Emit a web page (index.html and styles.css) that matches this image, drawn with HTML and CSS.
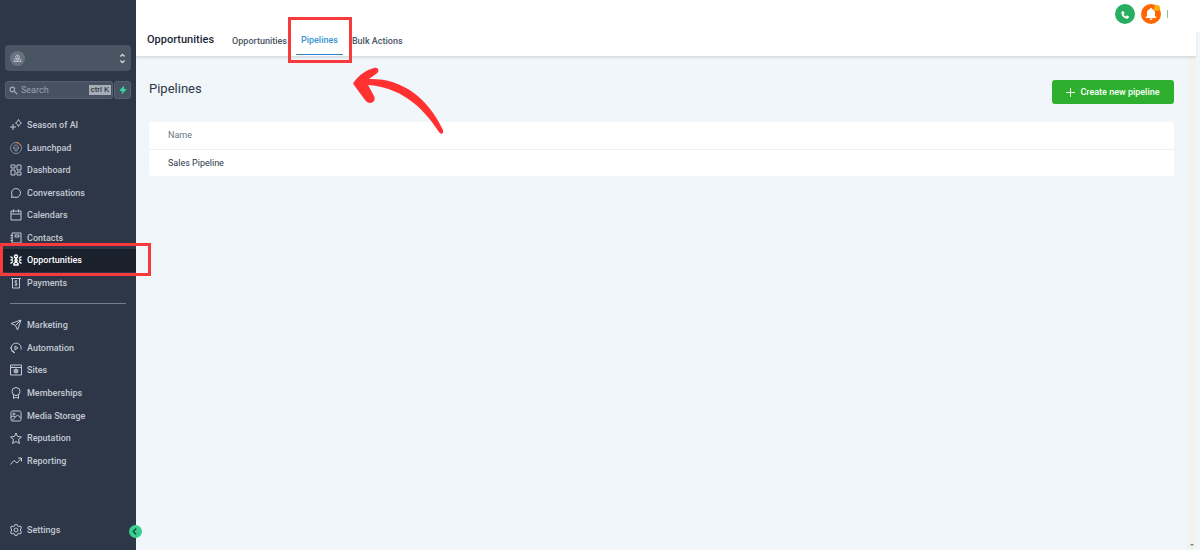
FILE: index.html
```html
<!DOCTYPE html>
<html lang="en">
<head>
    <meta charset="UTF-8">
    <meta name="viewport" content="width=device-width, initial-scale=1.0">
    <title>Pipelines</title>
    <link rel="stylesheet" href="styles.css">
</head>
<body>
    <aside class="sidebar">
        <button class="account" aria-label="Switch account">
            <span class="avatar">
                <svg viewBox="0 0 24 24"><circle cx="12" cy="8" r="5"/><circle cx="12" cy="8" r="1"/><path d="M8 12l-5 4v4h18v-4l-5-4M8 13l4 5 4-5"/></svg>
            </span>
            <svg class="updown" viewBox="0 0 10 16"><path d="M2 5l3-3 3 3M2 11l3 3 3-3"/></svg>
        </button>

        <div class="search-row">
            <label class="search">
                <svg viewBox="0 0 24 24"><circle cx="9" cy="9" r="6"/><path d="M14 14l8 8"/></svg>
                <input type="text" placeholder="Search" aria-label="Search">
                <kbd>ctrl K</kbd>
            </label>
            <button class="quick" aria-label="Quick actions">
                <svg viewBox="0 0 16 16"><path d="M9 1L2 9h5l-1 6 8-8H9z"/></svg>
            </button>
        </div>

        <nav>
            <ul class="menu menu-main">
                <li><a href="#"><svg viewBox="0 0 24 24"><path d="M17 1l2 4 4 3-4 3-2 4-2-4-4-3 4-3zM6 10v12M0 16h12"/></svg>Season of AI</a></li>
                <li><a href="#"><svg class="launch" viewBox="0 0 24 24"><circle cx="12" cy="12" r="11"/><path d="M9 14H7v-4l3-4h4l3 4v4h-2M10 10v8h4v-8"/><path class="arc" d="M12 1a11 11 0 0 1 10 7"/></svg>Launchpad</a></li>
                <li><a href="#"><svg viewBox="0 0 24 24"><path d="M2 2h8v6H2zM14 2h8v10h-8zM2 12h8v10H2zM14 16h8v6h-8z"/></svg>Dashboard</a></li>
                <li><a href="#"><svg viewBox="0 0 24 24"><path d="M3 21l1-5a9 9 0 1 1 4 4z"/></svg>Conversations</a></li>
                <li><a href="#"><svg viewBox="0 0 24 24"><path d="M2 4h20v18H2zM2 10h20M7 1v6M17 1v6"/></svg>Calendars</a></li>
                <li><a href="#"><svg viewBox="0 0 24 24"><path d="M4 2h18v20H4zM1 7h5M1 12h5M1 17h5M10 6h8v4h-8z"/></svg>Contacts</a></li>
                <li class="active">
                    <a href="#"><svg viewBox="0 0 24 24"><circle cx="12" cy="5" r="3"/><circle cx="12" cy="13" r="2"/><path d="M12 8v3M8 22v-3l4-3 4 3v3zM1 5l5 4M1 12h5M1 19l5-4M23 5l-5 4M23 12h-5M23 19l-5-4"/></svg>Opportunities</a>
                    <span class="marker marker-menu"></span>
                </li>
                <li><a href="#"><svg viewBox="0 0 24 24"><path d="M2 3h20M5 3v19h14V3M14 8c-4-2-6 2-2 4s2 6-3 4M12 6v12"/></svg>Payments</a></li>
            </ul>
            <hr>
            <ul class="menu menu-more">
                <li><a href="#"><svg viewBox="0 0 24 24"><path d="M2 9l20-7-7 20-4-9zM22 2L11 13"/></svg>Marketing</a></li>
                <li><a href="#"><svg viewBox="0 0 24 24"><path d="M10 22a10 10 0 1 1 12-7M0 12h4M10 8l6 4-6 4zM3 18h4v4"/></svg>Automation</a></li>
                <li><a href="#"><svg viewBox="0 0 24 24"><path d="M1 2h22v20H1zM1 7h22M5 4h1M9 4h1"/><circle cx="12" cy="14" r="4"/><path d="M12 10v8M8 14h8"/></svg>Sites</a></li>
                <li><a href="#"><svg viewBox="0 0 24 24"><circle cx="12" cy="9" r="8"/><path d="M7 15v8l5-3 5 3v-8"/></svg>Memberships</a></li>
                <li><a href="#"><svg viewBox="0 0 24 24"><rect x="2" y="2" width="20" height="20" rx="3"/><circle cx="8" cy="8" r="2"/><path d="M4 21L15 10l7 6M2 14l4-2 5 2"/></svg>Media Storage</a></li>
                <li><a href="#"><svg viewBox="0 0 24 24"><path d="M12 2l3 7 8 1-6 5 2 8-7-4-7 4 2-8-6-5 8-1z"/></svg>Reputation</a></li>
                <li><a href="#"><svg viewBox="0 0 24 24"><path d="M1 19l7-8 6 5 9-10M16 6h7v7"/></svg>Reporting</a></li>
            </ul>
        </nav>

        <div class="settings">
            <a href="#"><svg viewBox="0 0 24 24"><path d="M10 1h4l1 3 3 1 3-1 2 4-2 2v4l2 2-2 4-3-1-3 1-1 3h-4l-1-3-3-1-3 1-2-4 2-2v-4L1 8l2-4 3 1 3-1z"/><circle cx="12" cy="12" r="4"/></svg>Settings</a>
            <button class="collapse" aria-label="Collapse sidebar">
                <svg viewBox="0 0 12 12"><path d="M7 2L3 6l4 4"/></svg>
            </button>
        </div>
    </aside>

    <div class="page">
        <div class="topbar">
            <button class="round phone" aria-label="Phone">
                <svg viewBox="0 0 24 24"><path d="M5 2L1 6c0 10 7 17 17 17l4-5-6-4-3 3c-3-1-5-3-6-6l3-3z"/></svg>
            </button>
            <button class="round bell" aria-label="Notifications">
                <svg viewBox="0 0 24 24"><path d="M12 0a2 2 0 0 0-2 2C6 3 4 6 4 10v6l-3 3v1h22v-1l-3-3v-6c0-4-2-7-6-8a2 2 0 0 0-2-2zM9 21h6a3 3 0 0 1-6 0z"/></svg>
                <span class="dot"></span>
            </button>
            <span class="next"></span>
        </div>
        <header class="header">
            <h1>Opportunities</h1>
            <nav class="tabs">
                <a href="#">Opportunities</a>
                <a href="#" class="current">Pipelines<span class="marker marker-tab"></span>
                    <svg class="arrow" viewBox="0 0 92 68"><path d="M1 15C6 8 13 3 21 1c5-1 6 4 2 6l-7 5c31-1 58 17 74 51 1 4-2 5-4 2C68 37 45 20 15 18l6 11c3 6-5 10-9 4L1 18c-1-1-1-2 0-3z"/></svg>
                </a>
                <a href="#">Bulk Actions</a>
            </nav>
        </header>

        <main class="content">
            <div class="content-head">
                <h2>Pipelines</h2>
                <button class="create">
                    <svg viewBox="0 0 10 10"><path d="M5 0v10M0 5h10"/></svg>
                    Create new pipeline
                </button>
            </div>
            <table>
                <thead>
                    <tr><th>Name</th></tr>
                </thead>
                <tbody>
                    <tr><td>Sales Pipeline</td></tr>
                </tbody>
            </table>
            <div class="track"><span></span></div>
        </main>
    </div>
</body>
</html>
```
FILE: styles.css
```css
* {
    box-sizing: border-box;
}
body {
    margin: 0;
    display: flex;
    min-height: 100vh;
    font-family: Roboto, Arial, sans-serif;
    font-size: 9px;
    color: #2d3748;
    background: #f1f6fa;
}
a {
    color: inherit;
    text-decoration: none;
}
button {
    font: inherit;
    border: none;
    padding: 0;
    cursor: pointer;
}
svg {
    display: block;
    flex: none;
    fill: none;
    stroke: currentColor;
    stroke-width: 2;
}
ul {
    list-style: none;
    margin: 0;
    padding: 0;
}

/* sidebar */
.sidebar {
    width: 136px;
    flex: none;
    display: flex;
    flex-direction: column;
    padding-top: 45px;
    background: #2d3748;
    color: #c3c9d2;
}
.account {
    display: flex;
    align-items: center;
    justify-content: space-between;
    height: 26px;
    margin: 0 5px;
    padding: 0 5px;
    border-radius: 4px;
    background: #4a5564;
    color: #d5d9df;
}
.avatar {
    display: grid;
    place-items: center;
    width: 15px;
    height: 15px;
    border-radius: 50%;
    background: #687280;
}
.avatar svg {
    width: 9px;
    height: 9px;
}
.updown {
    width: 7px;
    height: 11px;
}
.search-row {
    display: flex;
    gap: 1px;
    margin: 10px 5px 15px;
}
.search {
    flex: 1;
    min-width: 0;
    display: flex;
    align-items: center;
    gap: 3px;
    height: 18px;
    padding: 0 1px 0 3px;
    border: 1px solid #566171;
    border-radius: 3px;
    background: #465161;
}
.search svg {
    width: 9px;
    height: 9px;
    stroke-width: 3;
    color: #a3abb7;
}
.search input {
    flex: 1;
    min-width: 0;
    padding: 0;
    border: none;
    outline: none;
    background: none;
    font: inherit;
    color: #ffffff;
}
.search input::placeholder {
    color: #9aa3b0;
    opacity: 1;
}
kbd {
    padding: 0 2px;
    font: 400 8px/10px Roboto, Arial, sans-serif;
    white-space: nowrap;
    color: #111827;
    background: #a6adb7;
}
.quick {
    display: grid;
    place-items: center;
    width: 17px;
    border: 1px solid #566171;
    border-radius: 3px;
    background: #465161;
}
.quick svg {
    width: 8px;
    height: 8px;
    fill: #37d39b;
    stroke: #37d39b;
}
.menu {
    display: grid;
    grid-auto-rows: 1fr;
}
.menu-main {
    height: 180px;
}
.menu-more {
    height: 158px;
}
.menu li {
    display: flex;
    position: relative;
}
.menu a,
.settings a {
    flex: 1;
    display: flex;
    align-items: center;
    gap: 5px;
    padding-left: 10px;
    font-weight: 500;
}
.menu svg,
.settings a svg {
    width: 12px;
    height: 12px;
}
.menu .launch {
    color: #7f8998;
}
.launch .arc {
    stroke: #d97b4d;
}
.menu .active {
    background: #1a202c;
    color: #ffffff;
}
.active svg {
    stroke-width: 3;
}
hr {
    width: 116px;
    height: 1px;
    margin: 9px 10px 10px;
    border: none;
    background: #718096;
}
.settings {
    display: flex;
    align-items: center;
    height: 22px;
    margin-top: auto;
    margin-bottom: 9px;
    position: relative;
}
.collapse {
    position: absolute;
    right: -6px;
    top: 6px;
    display: grid;
    place-items: center;
    width: 13px;
    height: 13px;
    border-radius: 50%;
    background: #37d08f;
    color: #1a4d3c;
}
.collapse svg {
    width: 9px;
    height: 9px;
}

/* red highlights */
.marker {
    position: absolute;
    z-index: 2;
    border: 3px solid #f83a3c;
    pointer-events: none;
}
.marker-menu {
    inset: -6px -15px -4px 0;
}
.marker-tab {
    inset: -15px -9px -9px -8px;
}
.arrow {
    position: absolute;
    z-index: 2;
    left: 57px;
    top: 35px;
    width: 92px;
    height: 68px;
    fill: #ff3131;
    stroke: none;
    pointer-events: none;
}

/* page */
.page {
    flex: 1;
    min-width: 0;
    display: flex;
    flex-direction: column;
}
.topbar {
    display: flex;
    align-items: center;
    justify-content: flex-end;
    gap: 6px;
    height: 32px;
    padding: 0 32px 4px 0;
    background: #ffffff;
}
.round {
    position: relative;
    display: grid;
    place-items: center;
    width: 20px;
    height: 20px;
    border-radius: 50%;
    color: #ffffff;
}
.round svg {
    fill: currentColor;
    stroke: none;
}
.phone {
    background: #27ae60;
}
.phone svg {
    width: 9px;
    height: 9px;
}
.bell {
    background: #ff6600;
}
.bell svg {
    width: 12px;
    height: 12px;
}
.dot {
    position: absolute;
    top: 1px;
    right: 1px;
    width: 6px;
    height: 6px;
    border-radius: 50%;
    background: #ffb000;
}
.next {
    width: 1px;
    height: 8px;
    background: #7fc99d;
}
.header {
    display: flex;
    height: 24px;
    margin-right: 4px;
    padding-left: 11px;
    background: #ffffff;
    box-shadow: 0 2px 2px rgba(0, 0, 0, 0.1);
    position: relative;
    z-index: 1;
}
h1 {
    margin: 0 13px 0 0;
    font-size: 11px;
    font-weight: 500;
    line-height: 16px;
    color: #1f2937;
}
.tabs {
    display: flex;
    font-weight: 500;
    line-height: 18px;
    color: #4a5564;
}
.tabs a {
    padding: 0 5px;
    white-space: nowrap;
}
.tabs .current {
    position: relative;
    height: 23px;
    margin: 0 4px;
    line-height: 16px;
    border-bottom: 1px solid #3182ce;
    color: #3a96d2;
}
.content {
    flex: 1;
    position: relative;
    padding: 24px 26px 24px 13px;
}
.content-head {
    display: flex;
    justify-content: space-between;
    height: 24px;
    margin-bottom: 18px;
}
h2 {
    margin: 0;
    font-size: 13px;
    font-weight: 400;
    line-height: 18px;
}
.create {
    display: flex;
    align-items: center;
    justify-content: center;
    gap: 5px;
    width: 122px;
    border-radius: 3px;
    background: #2eb02e;
    color: #ffffff;
    font-weight: 500;
}
.create svg {
    width: 9px;
    height: 9px;
    stroke-width: 1;
}
table {
    width: 100%;
    border-collapse: collapse;
    border-radius: 3px;
    background: #ffffff;
}
th,
td {
    height: 27px;
    padding: 0 19px;
    font-weight: 400;
    text-align: left;
}
th {
    border-bottom: 1px solid #edf1f5;
    color: #6b7684;
}
.track {
    position: absolute;
    top: 0;
    right: 4px;
    bottom: 0;
    width: 9px;
    display: flex;
    align-items: flex-end;
    justify-content: center;
    padding-bottom: 4px;
    background: #f3f3f2;
}
.track span {
    border: 2px solid transparent;
    border-top-color: #7d7d7d;
    border-bottom: none;
}
```
